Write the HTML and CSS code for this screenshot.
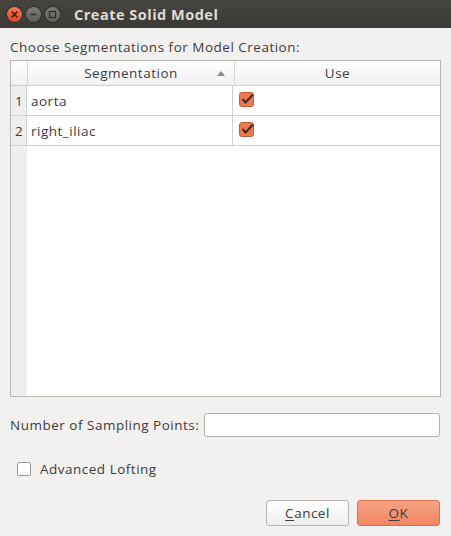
FILE: index.html
```html
<!DOCTYPE html>
<html>
<head>
<meta charset="utf-8">
<link rel="stylesheet" href="styles.css">
</head>
<body>
<div class="window">
  <div class="titlebar">
    <div class="wbtns">
      <span class="wb close"><svg width="15" height="15" viewBox="0 0 15 15"><path d="M5 5 L10 10 M10 5 L5 10" stroke="#3a1a10" stroke-width="1.6" stroke-linecap="round"/></svg></span>
      <span class="wb"><svg width="15" height="15" viewBox="0 0 15 15"><path d="M4.5 7.5 H10.5" stroke="#2e2d2a" stroke-width="1.6"/></svg></span>
      <span class="wb"><svg width="15" height="15" viewBox="0 0 15 15"><rect x="4.5" y="4.5" width="6" height="6" fill="none" stroke="#2e2d2a" stroke-width="1.3"/></svg></span>
    </div>
    <div class="title">Create Solid Model</div>
  </div>
  <div class="content">
    <div class="heading">Choose Segmentations for Model Creation:</div>
    <div class="table">
      <div class="thead">
        <div class="corner"></div>
        <div class="th seg">Segmentation<span class="sort"></span></div>
        <div class="th use">Use</div>
      </div>
      <div class="row">
        <div class="rh">1</div>
        <div class="td seg">aorta</div>
        <div class="td use"><span class="chk"><svg width="15" height="15" viewBox="0 0 15 15"><rect x="0.5" y="0.5" width="14" height="14" rx="2.5" fill="#ec7a4c" stroke="#c45c35"/><path d="M3.5 7 L6.5 10.5 L14 2.5" fill="none" stroke="#4a2a20" stroke-width="2"/></svg></span></div>
      </div>
      <div class="row">
        <div class="rh">2</div>
        <div class="td seg">right_iliac</div>
        <div class="td use"><span class="chk"><svg width="15" height="15" viewBox="0 0 15 15"><rect x="0.5" y="0.5" width="14" height="14" rx="2.5" fill="#ec7a4c" stroke="#c45c35"/><path d="M3.5 7 L6.5 10.5 L14 2.5" fill="none" stroke="#4a2a20" stroke-width="2"/></svg></span></div>
      </div>
      <div class="filler">
        <div class="rhfill"></div>
        <div class="blank"></div>
      </div>
    </div>
    <div class="sampling">
      <span class="lbl">Number of Sampling Points:</span>
      <div class="input"></div>
    </div>
    <div class="option">
      <span class="box"></span>
      <span class="lbl">Advanced Lofting</span>
    </div>
    <div class="buttons">
      <div class="btn"><u>C</u>ancel</div>
      <div class="btn ok"><u>O</u>K</div>
    </div>
  </div>
</div>
</body>
</html>
```

FILE: styles.css
```css
html, body {
  margin: 0;
  padding: 0;
}
body {
  width: 451px;
  height: 536px;
  overflow: hidden;
  background: #f2f1f0;
  font-family: "Open Sans", "DejaVu Sans", sans-serif;
  font-size: 13.5px;
  letter-spacing: 0.5px;
  color: #3c3c3c;
}
.window {
  display: flex;
  flex-direction: column;
  height: 536px;
}
.titlebar {
  height: 28px;
  background: linear-gradient(#45443f, #3b3a36);
  display: flex;
  align-items: center;
  box-sizing: border-box;
  padding-left: 7px;
}
.wbtns {
  display: flex;
  gap: 4px;
}
.wb {
  width: 15px;
  height: 15px;
  border-radius: 50%;
  background: linear-gradient(#7c7b76, #5f5e5a);
  display: flex;
  box-shadow: 0 0 0 1px #2f2e2b;
}
.wb.close {
  background: linear-gradient(#f47a52, #dd4a1e);
}
.title {
  margin-left: 14px;
  color: #dfdbd2;
  font-weight: bold;
  font-size: 14.5px;
  letter-spacing: 0.5px;
}
.content {
  padding: 0 11px 0 10px;
  display: flex;
  flex-direction: column;
}
.heading {
  margin-top: 9px;
  height: 23px;
  line-height: 20px;
}
.table {
  border: 1px solid #bcb9b5;
  height: 335px;
  display: flex;
  flex-direction: column;
  background: #fff;
  margin-right: -1px;
}
.thead {
  display: flex;
  height: 24px;
  background: linear-gradient(#ffffff, #f1f1f1);
  border-bottom: 1px solid #cfcfcf;
}
.corner {
  width: 16px;
  border-right: 1px solid #d6d6d6;
}
.th {
  display: flex;
  align-items: center;
  justify-content: center;
  position: relative;
}
.th.seg {
  width: 206px;
  border-right: 1px solid #d6d6d6;
}
.th.use {
  flex: 1;
}
.sort {
  position: absolute;
  right: 9px;
  top: 10px;
  width: 0;
  height: 0;
  border-left: 4px solid transparent;
  border-right: 4px solid transparent;
  border-bottom: 5px solid #8a8a8a;
}
.row {
  display: flex;
  height: 29px;
  border-bottom: 1px solid #d0d0d0;
}
.rh {
  width: 16px;
  background: #f0efee;
  border-right: 1px solid #d0d0d0;
  display: flex;
  align-items: center;
  justify-content: center;
  padding-left: 1px;
  box-sizing: border-box;
}
.td {
  display: flex;
  align-items: center;
}
.td.seg {
  width: 206px;
  padding-left: 4px;
  box-sizing: border-box;
  border-right: 1px solid #d0d0d0;
}
.td.use {
  flex: 1;
  padding-left: 6px;
}
.chk {
  display: flex;
  margin-top: -2px;
}
.filler {
  flex: 1;
  display: flex;
}
.rhfill {
  width: 16px;
  background: #f0efee;
}
.blank {
  flex: 1;
  background: #fff;
}
.sampling {
  margin-top: 16px;
  display: flex;
  align-items: center;
  gap: 5px;
}
.input {
  flex: 1;
  height: 22px;
  background: #fff;
  border: 1px solid #b5b1ab;
  border-radius: 3px;
}
.option {
  margin-top: 23px;
  display: flex;
  align-items: center;
  padding-left: 7px;
  gap: 9px;
}
.box {
  width: 12px;
  height: 12px;
  border: 1px solid #9c9a97;
  border-radius: 2px;
  background: #fff;
}
.buttons {
  margin-top: 22px;
  display: flex;
  justify-content: flex-end;
  gap: 8px;
}
.btn {
  width: 81px;
  height: 24px;
  border: 1px solid #b8b5b0;
  border-radius: 3px;
  background: linear-gradient(#ffffff, #efefef);
  display: flex;
  align-items: center;
  justify-content: center;
}
.btn.ok {
  background: linear-gradient(#f7a385, #f08562);
  border-color: #d8714c;
}
.btn u {
  text-underline-offset: 2px;
}
```
